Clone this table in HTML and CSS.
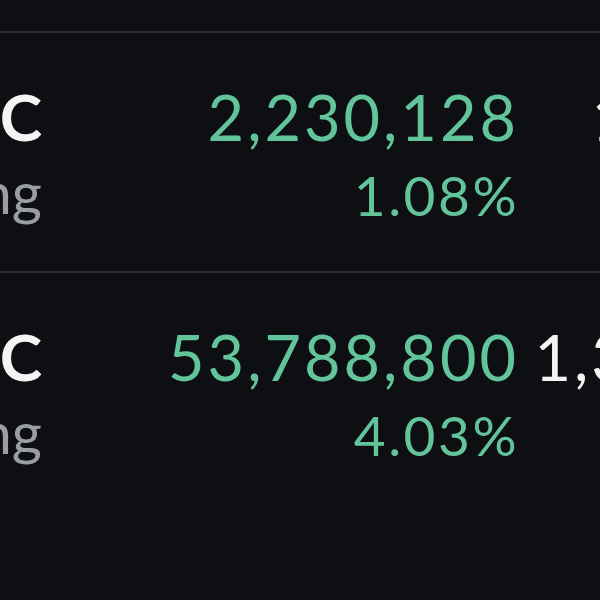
FILE: index.html
```html
<!DOCTYPE html>
<html>
<head>
<meta charset="utf-8">
<link rel="stylesheet" href="styles.css">
</head>
<body>
<div class="screen">
  <div class="topbar"></div>
  <div class="list">
    <div class="row divided">
      <div class="name">
        <div class="ticker">C</div>
        <div class="label">ng</div>
      </div>
      <div class="spacer"></div>
      <div class="stat">
        <div class="big up">2,230,128</div>
        <div class="small up">1.08%</div>
      </div>
      <div class="extra">
        <div class="big white">152</div>
      </div>
    </div>
    <div class="row">
      <div class="name">
        <div class="ticker">C</div>
        <div class="label">ng</div>
      </div>
      <div class="spacer"></div>
      <div class="stat">
        <div class="big up">53,788,800</div>
        <div class="small up">4.03%</div>
      </div>
      <div class="extra">
        <div class="big white">1,356</div>
      </div>
    </div>
  </div>
</div>
</body>
</html>
```

FILE: styles.css
```css
html, body {
  margin: 0;
  padding: 0;
  background: #0e0f12;
  overflow: hidden;
}
.screen {
  width: 710px;
  height: 600px;
  background: #0e0f12;
  font-family: Lato, "Open Sans", sans-serif;
}
.topbar {
  height: 31px;
  border-bottom: 2px solid #2c2e33;
}
.row {
  display: flex;
  height: 240px;
  box-sizing: border-box;
  padding-top: 46px;
}
.row.divided {
  border-bottom: 2px solid #2c2e33;
}
.name {
  width: 42px;
  overflow: hidden;
  display: flex;
  flex-direction: column;
  align-items: flex-end;
}
.ticker {
  font-size: 64px;
  line-height: 76px;
  font-weight: 700;
  color: #f4f4f5;
  white-space: nowrap;
}
.label {
  font-size: 58px;
  line-height: 66px;
  margin-top: 4px;
  color: #9b9da4;
  white-space: nowrap;
}
.spacer {
  flex: 1;
}
.stat {
  display: flex;
  flex-direction: column;
  align-items: flex-end;
  margin-right: 14px;
}
.extra {
  width: 177px;
  display: flex;
  flex-direction: column;
  align-items: flex-end;
}
.big {
  font-size: 63px;
  line-height: 76px;
  letter-spacing: 3px;
  white-space: nowrap;
}
.small {
  font-size: 55px;
  line-height: 66px;
  margin-top: 7px;
  letter-spacing: 2.5px;
  white-space: nowrap;
}
.up {
  color: #62c49b;
}
.white {
  color: #f4f4f5;
}
```
